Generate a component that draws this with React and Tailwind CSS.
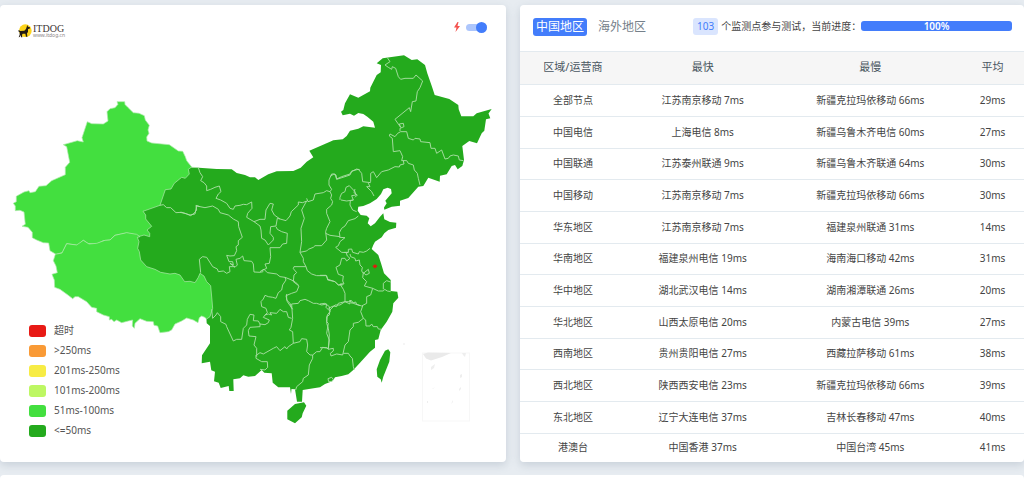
import React from "react";

const FONT = "font-['Noto_Sans','Noto_Sans_CJK_SC',sans-serif]";

const legend = [
  { label: "超时", color: "bg-[#e81a15]" },
  { label: ">250ms", color: "bg-[#f99a36]" },
  { label: "201ms-250ms", color: "bg-[#f7ec45]" },
  { label: "101ms-200ms", color: "bg-[#bdf763]" },
  { label: "51ms-100ms", color: "bg-[#43df3f]" },
  { label: "<=50ms", color: "bg-[#24aa1d]" },
];

const rows = [
  ["全部节点", "江苏南京移动 7ms", "新疆克拉玛依移动 66ms", "29ms"],
  ["中国电信", "上海电信 8ms", "新疆乌鲁木齐电信 60ms", "27ms"],
  ["中国联通", "江苏泰州联通 9ms", "新疆乌鲁木齐联通 64ms", "30ms"],
  ["中国移动", "江苏南京移动 7ms", "新疆克拉玛依移动 66ms", "30ms"],
  ["华东地区", "江苏南京移动 7ms", "福建泉州联通 31ms", "14ms"],
  ["华南地区", "福建泉州电信 19ms", "海南海口移动 42ms", "31ms"],
  ["华中地区", "湖北武汉电信 14ms", "湖南湘潭联通 26ms", "20ms"],
  ["华北地区", "山西太原电信 20ms", "内蒙古电信 39ms", "27ms"],
  ["西南地区", "贵州贵阳电信 27ms", "西藏拉萨移动 61ms", "38ms"],
  ["西北地区", "陕西西安电信 23ms", "新疆克拉玛依移动 66ms", "39ms"],
  ["东北地区", "辽宁大连电信 37ms", "吉林长春移动 47ms", "40ms"],
  ["港澳台", "中国香港 37ms", "中国台湾 45ms", "41ms"],
];

const MAINLAND =
  "M191.7 167.3L216.7 169 231.7 169.3 236.7 173 245 175 250 177.3 255 177.3 258.3 180 268.3 174.3 276.7 171.3 293.3 171 300.7 167.7 306.7 161.7 313.3 157.3 309.3 150.7 330 141.7 333.3 140.3 342.7 139.3 346.7 136 350 130.7 358.3 128.7 363.3 126.3 375 127.7 373.3 121.7 367.3 116.7 363.3 114 358.3 113 354 115.7 350 113.7 342.7 115.3 341 111.7 343.3 110 345 103.3 350 94.3 358.3 97.7 370 91.3 370.3 87.7 376.7 75 380.7 72.3 381 65 376.7 63.3 382.7 58.3 404 55.3 411.7 60 417.3 59.3 425 65 427.3 73.3 432 86.7 434.7 95 449.3 99 458.3 105 458.7 109.3 461.3 116.3 473.3 116.3 476.7 113.3 491.7 109 488.5 113.5 490.3 118.3 486 119.3 484.3 130.7 481.7 133.3 477 143.3 469.3 141 462.3 146 464 160 462.3 166 457.7 169.3 455 165 451.7 166 446.7 174.3 440 175.7 439.7 181.7 428.3 177.7 423.3 186 418.3 186.7 408.3 198 400 200.7 400 205.7 391.7 206.7 384.3 209.7 384 207.5 386.7 203.3 385.3 200.7 391.7 193.3 391 189 387.7 187.7 383.3 189.3 381 194 376.7 199 370 203.3 363.3 206 358.3 206.7 357.7 210.7 360.7 215 366.7 215.7 369.3 218.3 367.7 223.3 370.7 226.3 375 223.3 380 216.7 383.3 213.3 384.3 219.3 390 222 396.3 222.7 396 227.7 388.3 230 384.3 233.3 381.7 237.3 375 241.7 373.3 245 371.7 249 378.3 255 381 263.3 384 273.3 390.7 280 390.7 291 397.3 291.7 398.3 297.7 393.3 303.3 392.3 311.7 386.7 321.7 380.7 330 378.3 339.3 375 340 375 347.7 370 351.7 360 362.7 353.3 370 348.3 374.3 341.7 376 335 377.3 332.7 381 325 384 320 387.3 316.7 387.7 302.7 390 302 401.7 297 401.7 295 389.3 291.5 389 291 394 290 387.3 278.3 387.3 272.7 382.7 271.7 373.3 264.3 372.7 261.7 370 255 376 248.3 376.7 243.3 375.3 240 378.3 233.3 379.3 233.7 391 229.3 391 228.7 386 220.7 388 218.7 382.7 214 381.3 215 371.7 211.3 370.3 210 361.7 201.7 363.3 202 355.3 210 343.3 210 326 206.7 323.3 206 312 190 295 130 262 128 225 140 205 165 185 185 168Z";
const HAINAN =
  "M295 404L304 402.3 306.3 405.7 302.7 413.3 301.7 417.3 295 423.3 287.3 419.3 287.3 410.7Z";
const TAIWAN =
  "M385 350.7L388.3 349.3 390.3 352.3 389.3 361.7 383.3 376.7 381.7 382.7 380.7 379.3 377.3 376.7 376.7 369.3 380 360Z";
const XINJIANG =
  "M117 101.7L124.7 101.7 125 104.5 128 107.5 133.3 112.7 139 113.3 144.3 115.7 145.3 120 149.3 125.3 148 130 149 133.3 146.7 137 147 141 151.7 143 169.3 144.7 178.3 151 182.7 151.3 185.3 156.7 186.7 160.7 191.7 167 188.3 169.3 189.3 174 185.3 178.3 181.7 177.3 174.3 183.3 171 189 165.3 189.7 160 205.3 143 211.3 145.7 215 145.7 219 151.7 226.3 147 230 149.7 233.3 149.7 236.7 144 235 137.3 237 135 234.7 126.7 233 115 235.3 110 240 103.3 240.7 96.7 244 88.3 243.7 83.3 240.3 77.7 245.3 66.7 243.7 62.3 252.7 56 254.3 50 250.7 48.7 243 43.3 242.7 36.7 240 32.3 237.7 32.3 232.3 28 227.3 22 226.3 25.3 224.3 24 212 20 210.3 15.3 210.7 15.3 206 13.3 203.3 16.3 201.7 16.3 196.3 24 192 29 190.7 30 192.7 35.3 191.7 39 186.3 46 185.7 51.7 180.7 65.3 174.7 65.3 167.3 69.7 162.3 66.7 146.7 63.3 144.7 77.3 140.7 83.3 142 82 137.7 87.3 121.7 91.7 123.7 103.3 124 108 121 107 111.7 110 108.7 115 107.7 118 104.3Z";
const TIBET =
  "M46 103L66 99 80 71 110 75 130 61 147 72 170 70 195 61 210 60 225 46 260 38 290 43 300 50 292 52 297 65 293 85 298 95 302 120 320 140 345 148 362 157 390 162 405 160 420 165 434 185 450 184 465 188 475 172 480 160 492 168 500 185 512 197 516 240 518 265 510 290 500 297 494 292 485 288 478 293 474 308 460 300 440 294 425 303 405 312 395 330 385 335 360 338 353 318 342 316 340 305 320 304 300 296 285 310 283 325 277 318 278 300 265 303 245 308 230 300 222 305 215 298 208 300 208 290 190 285 170 275 170 265 155 262 140 245 115 230 105 230 98 236 85 226 60 208 44 202 43 180 36 163 52 158 48 138 40 122Z";

/* Province borders, grouped by the part of the country they cover. */
const GANSU_WEST =
  "M480 346L490 344 500 353 512 353 528 368 545 367 560 372 572 377 582 370 590 360 588 346 600 350";
const NORTHWEST =
  "M35 52L55 53 60 68 68 80 62 92 72 98 80 108 80 122 92 118 105 112 118 108 123 125 115 132 108 145 122 150 140 160 150 175 160 178 165 168 180 166 190 163 200 164 215 156 216 175 203 190 200 202 222 215 240 208 255 208 258 180 270 160 280 162 275 180 283 195 300 207 318 212 330 198 334 185 355 165 355 156 368 158 380 153 M222 215L240 228 243 240 245 265 255 270 265 285 280 270 280 262 270 250 272 230 288 228 292 205 300 207 M288 230L292 238 305 245 322 250 320 280 308 282 300 293 270 293 272 320 268 340 255 342 260 355 245 362 M0 187L15 190 30 195 45 192 50 168 75 173 98 168 115 178 120 188 145 195 160 207 175 215 176 230 187 262 175 272 175 285 168 290 170 302 163 317 150 318 140 316 147 335 158 335 160 345 150 340 165 352 172 345 168 328 180 325 188 318 192 332 215 334 220 342 222 366 240 367 250 365 M165 350L148 350 150 365 140 370 130 363 115 365 112 357 98 350 80 322 68 320 58 328 62 368 M240 365L252 358 262 368 290 372 300 380 315 382 330 388 345 395 355 405";
const NORTH =
  "M380 153L365 180 373 205 363 235 365 275 360 307 370 325 370 335 378 350 M450 125L455 135 452 145 458 155 455 165 440 178 440 190 450 215 440 235 437 245 440 270 425 287 405 287 400 292 385 298 380 303 360 307 M380 145L384 155 400 150 405 132 430 128 440 122 450 125 455 118 447 105 447 90 455 72 465 72 470 88 495 80 510 75 515 65 530 57 540 60 M480 150L480 142 485 130 495 125 498 112 508 107 525 125 528 135 515 137 520 150 500 153 483 150 M520 150L511 152 510 165 518 180 530 185 M525 117L522 128 532 135 525 142 M437 250L450 256 480 260 478 248 485 235 495 228 505 212 525 206 535 198 M478 262L495 263 480 275 475 287 467 292 485 307 505 308 M378 350L342 350 340 356 350 368 342 375 340 395 357 408 350 425 335 430 318 437 322 455 338 478 M378 350L382 362 395 372 410 377 440 377 443 390 465 395 475 405 488 405 M315 382L318 390 308 405 305 420 295 428 288 445 278 442 265 440 255 436 250 447 243 455 245 470 258 475";
const SOUTH =
  "M95 58L98 85 108 75 112 68 122 80 122 95 138 103 140 110 160 153 170 148 185 148 190 115 200 105 202 88 210 73 222 75 220 92 235 93 240 102 255 104 265 98 M258 55L262 68 255 75 265 72 275 75 270 68 290 70 300 58 310 65 320 65 325 82 335 85 M265 98L268 90 250 82 255 75 M240 102L240 110 210 112 205 122 207 138 228 140 222 165 230 175 230 200 M230 195L240 188 250 192 280 175 290 170 300 182 315 170 320 177 325 170 340 160 M335 42L338 85 333 112 328 120 338 125 340 160 M335 42L355 40 360 32 375 28 385 32 400 40 410 40 425 45 440 42 438 52 448 62 465 45 480 45 495 35 505 35 515 32 520 40 540 47 M340 160L360 155 365 146 380 148 383 165 380 185 390 195 398 195 398 205 388 225 385 255 370 265 368 275 350 290 347 300 M228 195L228 205 245 215 262 215 263 232 255 240 240 238 M398 195L410 185 420 185 428 172 445 175 M450 60L448 75 440 80 440 95 445 100 440 130 448 150 445 178 M444 266L455 262 460 268 456 274 446 275Z M320 12L320 30 330 40 335 55";
const EAST =
  "M0 503L20 503 25 508 40 505 40 513 31 520 33 528 50 522 68 525 75 495 85 485 90 450 100 440 100 430 115 427 130 415 M70 520L85 520 90 528 97 535 100 560 103 570 M130 415L122 395 128 378 M130 415L137 420 138 438 150 438 155 432 160 440 172 440 175 447 185 448 M25 385L40 378 50 380 55 370 75 365 90 372 90 360 95 370 107 366 110 373 125 378 140 370 140 350 152 345 158 325 175 333 190 333 194 328 202 333 212 335 M190 328L190 310 200 302 212 306 M90 222L92 230 105 235 107 243 118 240 120 255 127 262 125 273 130 280 145 268 148 280 138 285 130 278 128 293 140 305 133 318 158 325 M73 217L85 217 85 208 95 207 98 217 115 222 118 215 130 217 140 213 150 205 M78 217L82 228 90 235 80 243 75 235 65 235 60 255 48 262 55 283 70 288 68 303 72 312 60 312 M0 286L18 286 24 298 45 305 55 315 68 312 M60 312L70 328 75 340 75 365 M0 372L15 370 28 380 30 395 22 405 20 430 25 445 28 465 25 505";
const NORTHEAST =
  "M172 53L180 65 165 75 175 82 185 88 187 80 197 85 205 110 212 118 225 115 250 115 258 105 278 123 270 143 262 155 258 183 247 185 242 215 238 203 195 238 212 262 208 252 220 250 222 260 210 265 210 273 M178 288L180 282 195 290 203 280 212 275 230 275 235 295 250 300 255 295 270 297 272 305 300 308 303 325 315 325 320 340 335 330 345 357 355 355 360 348 370 345 385 348 388 360 400 362 M178 288L187 295 190 335 210 332 218 350 215 362 230 362 235 370 250 375 253 390 262 400 265 415 270 435 M220 362L222 372 210 375 208 381 195 380 175 390 155 395 140 413 130 395 122 400 122 425 115 430 120 440 110 440 125 455 132 468 M0 410L10 403 18 405 20 417 35 410 60 402 65 393 85 388 95 400 98 425 122 428";

function ChinaMap() {
  const dark = "#24aa1d";
  const light = "#43df3f";
  return (
    <svg viewBox="0 40 506 400" className="w-full" role="img" aria-label="中国地图">
      <g strokeLinejoin="round">
        <path d={MAINLAND} fill={dark} />
        <path d={HAINAN} fill={dark} />
        <path d={TAIWAN} fill={dark} />
        <path d={XINJIANG} fill={light} stroke="#aee9aa" strokeWidth=".7" />
        <path
          d={TIBET}
          transform="translate(40 220) scale(.3333)"
          fill={light}
          stroke="#aee9aa"
          strokeWidth="2.1"
        />
      </g>
      <g fill="none" stroke="#a9dfa4" strokeWidth="2.8" strokeLinejoin="round">
        <path d={GANSU_WEST} transform="translate(0 90) scale(.3333)" />
        <path d={NORTHWEST} transform="translate(180 150) scale(.3333)" />
        <path d={NORTH} transform="translate(180 150) scale(.3333)" />
        <path d={SOUTH} transform="translate(180 290) scale(.3333)" />
        <path d={EAST} transform="translate(320 180) scale(.3333)" />
        <path d={NORTHEAST} transform="translate(330 40) scale(.3333)" />
      </g>
      <path d="M375 263.800l.8 1.400 1.500.2-.4 1.600-1.100.5-.8 1.200-.9-1.200-1.200-.4-.2-1.600 1.500-.3z" fill="#e01b10" />
      <rect x="422.5" y="353" width="47" height="68" fill="none" stroke="#f7f7f7" />
      <path d="M423 354l5-1.500 23 .5-9 4-11 3.500-5-2z" fill="#eaeaea" />
      <path
        d="M462 353h4l-1 4-2-2zM431 367l4-3-1 4-3 2zM460 375l2-1v3l-2 1zM459 389l2-2v2l-2 2zM451 404l2-4v2zM427 401h1v2h-1zM432 389l3-2-2 2z"
        fill="#eeeeee"
      />
      <circle cx="404" cy="344" r=".7" fill="#e4e4e4" />
    </svg>
  );
}

function Logo() {
  return (
    <a href="#" aria-label="ITDOG" className="flex items-center gap-px text-[#3c3433]">
      <svg viewBox="0 0 42 42" className="size-3.5">
        <circle cx="22" cy="20" r="19" fill="#fdd41b" />
        <path
          d="M28 3l2 5 6 2-1 4-5 1 0 9-3 4 1 10h-4l-2-9-8 0-2 4 1 7h-4l-1-7-3 6-3 1 3-8 0-7-4-3 1-4 5 3 12-1 5-5z"
          fill="#231c14"
        />
      </svg>
      <span className="flex flex-col">
        <span className="font-['Liberation_Serif',serif] text-[10px] leading-[8px] font-medium">ITDOG</span>
        <span className="text-[5px] leading-[5px] text-[#8b8685]">www.itdog.cn</span>
      </span>
    </a>
  );
}

function SpeedToggle() {
  return (
    <label className="flex items-center gap-1.5">
      <svg viewBox="0 0 12 20" className="h-2.5 w-1.5" fill="#f4534f">
        <path d="M7 0L0 11h5L3 20l9-12H7l2-8z" />
      </svg>
      <input
        type="checkbox"
        role="switch"
        aria-label="快速测试"
        defaultChecked
        className="peer sr-only"
      />
      <span className="flex h-[7px] w-[21px] items-center justify-end rounded-full bg-[#adc6fc]">
        <span className="size-[11px] rounded-full bg-[#437dfb]" />
      </span>
    </label>
  );
}

function MapCard() {
  return (
    <section className="relative rounded bg-white pb-[21px] shadow-[0_3px_8px_rgba(90,110,130,0.22)]">
      <header className="flex h-[35px] items-start justify-between pt-[17px] pr-[19px] pl-[18px]">
        <div className="pt-0.5">
          <Logo />
        </div>
        <SpeedToggle />
      </header>
      <ChinaMap />
      <ul className="absolute bottom-[21px] left-[29px]">
        {legend.map((item) => (
          <li key={item.label} className="flex h-5 items-center gap-2 text-[10px] leading-4 text-[#555]">
            <span className={"h-3 w-[17px] rounded-[3px] " + item.color} />
            <span className="pb-0.5">{item.label}</span>
          </li>
        ))}
      </ul>
    </section>
  );
}

function ResultCard() {
  return (
    <section className="overflow-hidden rounded bg-white">
      <header className="flex h-[46px] items-center pr-3 pl-[13px] whitespace-nowrap">
        <div className="flex gap-[7px] pb-0.5 text-[12px] leading-[18px]">
          <button type="button" className="rounded-[3px] bg-[#437dfb] px-[3px] text-white">
            中国地区
          </button>
          <button type="button" className="rounded-[3px] px-1 text-[#75808a]">
            海外地区
          </button>
        </div>
        <div className="ml-[43px] flex flex-1 items-center pb-1 text-[10px] text-[#444]">
          <span className="mr-[3px] rounded-[3px] bg-[#dae5fe] px-1 leading-[17px] text-[#437dfb]">
            103
          </span>
          <span className="leading-4">个监测点参与测试，当前进度：</span>
          <div
            role="progressbar"
            aria-label="当前进度"
            aria-valuenow={100}
            className="flex h-2.5 flex-1 items-center justify-center rounded-[3px] bg-[#437dfb] text-[10px] leading-[10px] font-semibold text-white"
          >
            100%
          </div>
        </div>
      </header>
      <table className="w-full table-fixed border-collapse text-center text-[10px] leading-4 whitespace-nowrap text-[#444]">
        <colgroup>
          <col className="w-[21%]" />
          <col className="w-[30.5%]" />
          <col className="w-[36%]" />
          <col className="w-[12.5%]" />
        </colgroup>
        <thead>
          <tr className="h-[33px] border-y border-[#e3eaef] bg-[#f6f6f6] text-[11px] text-[#485560]">
            <th className="pb-0.5 font-normal">区域/运营商</th>
            <th className="pb-0.5 font-normal">最快</th>
            <th className="pb-0.5 font-normal">最慢</th>
            <th className="pb-0.5 font-normal">平均</th>
          </tr>
        </thead>
        <tbody>
          {rows.map((row, r) => (
            <tr
              key={row[0]}
              className={
                r === rows.length - 1
                  ? "h-7"
                  : "h-8 border-b border-[#e3eaef] nth-[3n]:h-[31px]"
              }
            >
              {row.map((cell, i) => (
                <td key={i} className="pb-0.5">
                  {cell}
                </td>
              ))}
            </tr>
          ))}
        </tbody>
      </table>
    </section>
  );
}

export default function App() {
  return (
    <main className={"flex min-h-screen flex-col gap-[13px] bg-[#e7ecf1] pt-[5px] " + FONT}>
      <div className="grid grid-cols-[506fr_504fr] gap-3.5">
        <MapCard />
        <div className="rounded shadow-[0_3px_8px_rgba(90,110,130,0.22)]">
          <ResultCard />
        </div>
      </div>
      <section className="flex-1 rounded-t bg-white" />
    </main>
  );
}
